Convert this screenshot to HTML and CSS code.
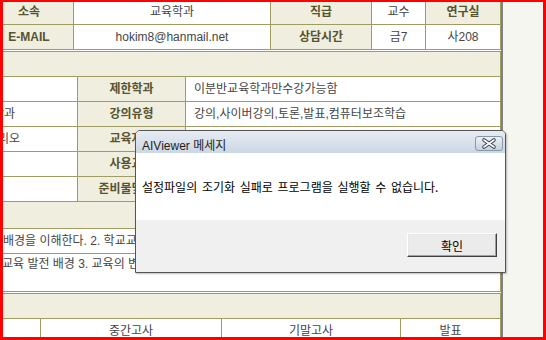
FILE: index.html
```html
<!DOCTYPE html>
<html>
    <head>
        <meta charset="utf-8">
        <title>강의계획서</title>
        <link rel="stylesheet" href="styles.css">
    </head>

    <body>
        <div class="screen">
            <div class="pane">
                <div class="sheet">
                    <table class="grid">
                        <colgroup>
                            <col class="w89"><col class="w197"><col class="w101"><col class="w54"><col class="w75">
                        </colgroup>
                        <tr>
                            <td class="hd">소속</td>
                            <td>교육학과</td>
                            <td class="hd">직급</td>
                            <td>교수</td>
                            <td class="hd">연구실</td>
                        </tr>
                        <tr>
                            <td class="hd">E-MAIL</td>
                            <td>hokim8@hanmail.net</td>
                            <td class="hd">상담시간</td>
                            <td>금7</td>
                            <td>사208</td>
                        </tr>
                    </table>

                    <table class="grid">
                        <colgroup>
                            <col class="w93"><col class="w108"><col class="w315">
                        </colgroup>
                        <tr><td class="band" colspan="3">&nbsp;</td></tr>
                        <tr>
                            <td></td>
                            <td class="hd">제한학과</td>
                            <td class="val">이분반교육학과만수강가능함</td>
                        </tr>
                        <tr>
                            <td class="lead">학과</td>
                            <td class="hd">강의유형</td>
                            <td class="val">강의,사이버강의,토론,발표,컴퓨터보조학습</td>
                        </tr>
                        <tr>
                            <td class="lead lead-wide">리오</td>
                            <td class="hd">교육자료</td>
                            <td class="val"></td>
                        </tr>
                        <tr>
                            <td></td>
                            <td class="hd">사용교재</td>
                            <td class="val"></td>
                        </tr>
                        <tr>
                            <td></td>
                            <td class="hd">준비물및기타</td>
                            <td class="val"></td>
                        </tr>
                        <tr><td class="band band-tall" colspan="3">&nbsp;</td></tr>
                        <tr>
                            <td class="text" colspan="3">배경을 이해한다. 2. 학교교육의 역사와 사회적 기능을 이해한다.</td>
                        </tr>
                        <tr>
                            <td class="text text-last" colspan="3">교육 발전 배경 3. 교육의 변화와 미래 교육의 방향</td>
                        </tr>
                    </table>

                    <table class="grid">
                        <colgroup>
                            <col class="w56"><col class="w181"><col class="w179"><col class="w100">
                        </colgroup>
                        <tr><td class="band" colspan="4">&nbsp;</td></tr>
                        <tr>
                            <td></td>
                            <td>중간고사</td>
                            <td>기말고사</td>
                            <td>발표</td>
                        </tr>
                    </table>
                </div>
            </div>
            <div class="side"></div>

            <div class="dialog">
                <div class="dialog-title">
                    <span>AIViewer 메세지</span>
                    <button class="close-btn" aria-label="닫기">
                        <svg width="26" height="13" viewBox="0 0 26 13">
                            <path d="M8 3 L18 10 M18 3 L8 10" stroke="#3b4450" stroke-width="3.6" stroke-linecap="round"/>
                            <path d="M8 3 L18 10 M18 3 L8 10" stroke="#ffffff" stroke-width="1.6" stroke-linecap="round"/>
                        </svg>
                    </button>
                </div>
                <div class="dialog-body">설정파일의 조기화 실패로 프로그램을 실행할 수 없습니다.</div>
                <div class="dialog-foot">
                    <button class="ok-btn">확인</button>
                </div>
            </div>
        </div>
    </body>
</html>
```

FILE: styles.css
```css
html, body {
    margin: 0px;
}
body {
    font-family: "Liberation Sans", "Noto Sans CJK KR", sans-serif;
    font-size: 12px;
}
.screen {
    position: relative;
    width: 546px;
    height: 340px;
    box-sizing: border-box;
    border: 3px solid #ff0000;
    border-top-width: 2px;
    display: flex;
    flex-flow: row nowrap;
    overflow: hidden;
}
.pane {
    width: 498px;
    border-right: 2px solid #808080;
    background-color: #ffffff;
    overflow: hidden;
}
.side {
    flex: 1;
    background-color: #f6f6f0;
}
.sheet {
    width: 517px;
    margin-left: -19px;
    margin-top: -3px;
}

/* tables */
.grid {
    width: 517px;
    table-layout: fixed;
    border-spacing: 0px;
    border-top: 1px solid #9e9c62;
    border-left: 1px solid #9e9c62;
    margin-bottom: 1px;
}
.grid td {
    box-sizing: border-box;
    padding: 0px;
    border-right: 1px solid #9e9c62;
    border-bottom: 1px solid #9e9c62;
    line-height: 24px;
    text-align: center;
    white-space: nowrap;
    overflow: hidden;
    color: #454545;
    background-color: #ffffff;
}
.grid td.hd {
    background-color: #efeedf;
    color: #57532f;
    font-weight: bold;
}
.grid td.band {
    background-color: #efeedf;
}
.grid td.band-tall {
    line-height: 26px;
}
.grid td.val {
    text-align: left;
    padding-left: 8px;
}
.grid td.lead {
    text-align: left;
    padding-left: 8px;
}
.grid td.lead-wide {
    padding-left: 13px;
}
.grid td.text {
    text-align: left;
    padding-left: 18px;
}
.grid td.text-last {
    line-height: 20px;
    padding-left: 17px;
    padding-bottom: 17px;
}
.w89 { width: 89px; }
.w197 { width: 197px; }
.w101 { width: 101px; }
.w54 { width: 54px; }
.w75 { width: 75px; }
.w93 { width: 93px; }
.w108 { width: 108px; }
.w315 { width: 315px; }
.w56 { width: 56px; }
.w181 { width: 181px; }
.w179 { width: 179px; }
.w100 { width: 100px; }

/* message box */
.dialog {
    position: absolute;
    left: 132px;
    top: 128px;
    width: 371px;
    height: 143px;
    box-sizing: border-box;
    border: 1px solid #555555;
    border-radius: 5px 5px 0px 0px;
    background-color: #f0f0f0;
    display: flex;
    flex-flow: column nowrap;
    box-shadow: 1px 1px 2px rgba(0, 0, 0, 0.25);
    overflow: hidden;
}
.dialog-title {
    height: 22px;
    display: flex;
    flex-flow: row nowrap;
    align-items: center;
    justify-content: space-between;
    padding: 0px 2px 0px 6px;
    background: linear-gradient(#e6ecf3, #ccd7e4);
    color: #1e1e1e;
    font-size: 12px;
}
.dialog-title span {
    padding-top: 4px;
}
.close-btn {
    outline: none;
    width: 28px;
    height: 15px;
    padding: 0px;
    margin-top: 2px;
    border: 1px solid #8797ab;
    border-radius: 3px;
    background: linear-gradient(#edf1f6, #c6d0dc);
    display: flex;
    justify-content: center;
    align-items: center;
}
.dialog-body {
    height: 67px;
    display: flex;
    align-items: center;
    padding-left: 6px;
    background-color: #ffffff;
    color: #000000;
    font-family: "Noto Sans CJK KR", sans-serif;
    font-size: 12px;
    word-spacing: 2px;
}
.dialog-foot {
    flex: 1;
    display: flex;
    justify-content: flex-end;
    align-items: flex-start;
    padding: 13px 8px 0px 0px;
}
.ok-btn {
    outline: none;
    width: 90px;
    height: 24px;
    padding: 0px;
    border: 1px solid;
    border-color: #ffffff #404040 #404040 #ffffff;
    box-shadow: inset -1px -1px 0px #a0a0a0, inset 1px 1px 0px #e6e6e6;
    background-color: #ebebeb;
    color: #000000;
    font-family: "Noto Sans CJK KR", sans-serif;
    font-size: 12px;
}
```
